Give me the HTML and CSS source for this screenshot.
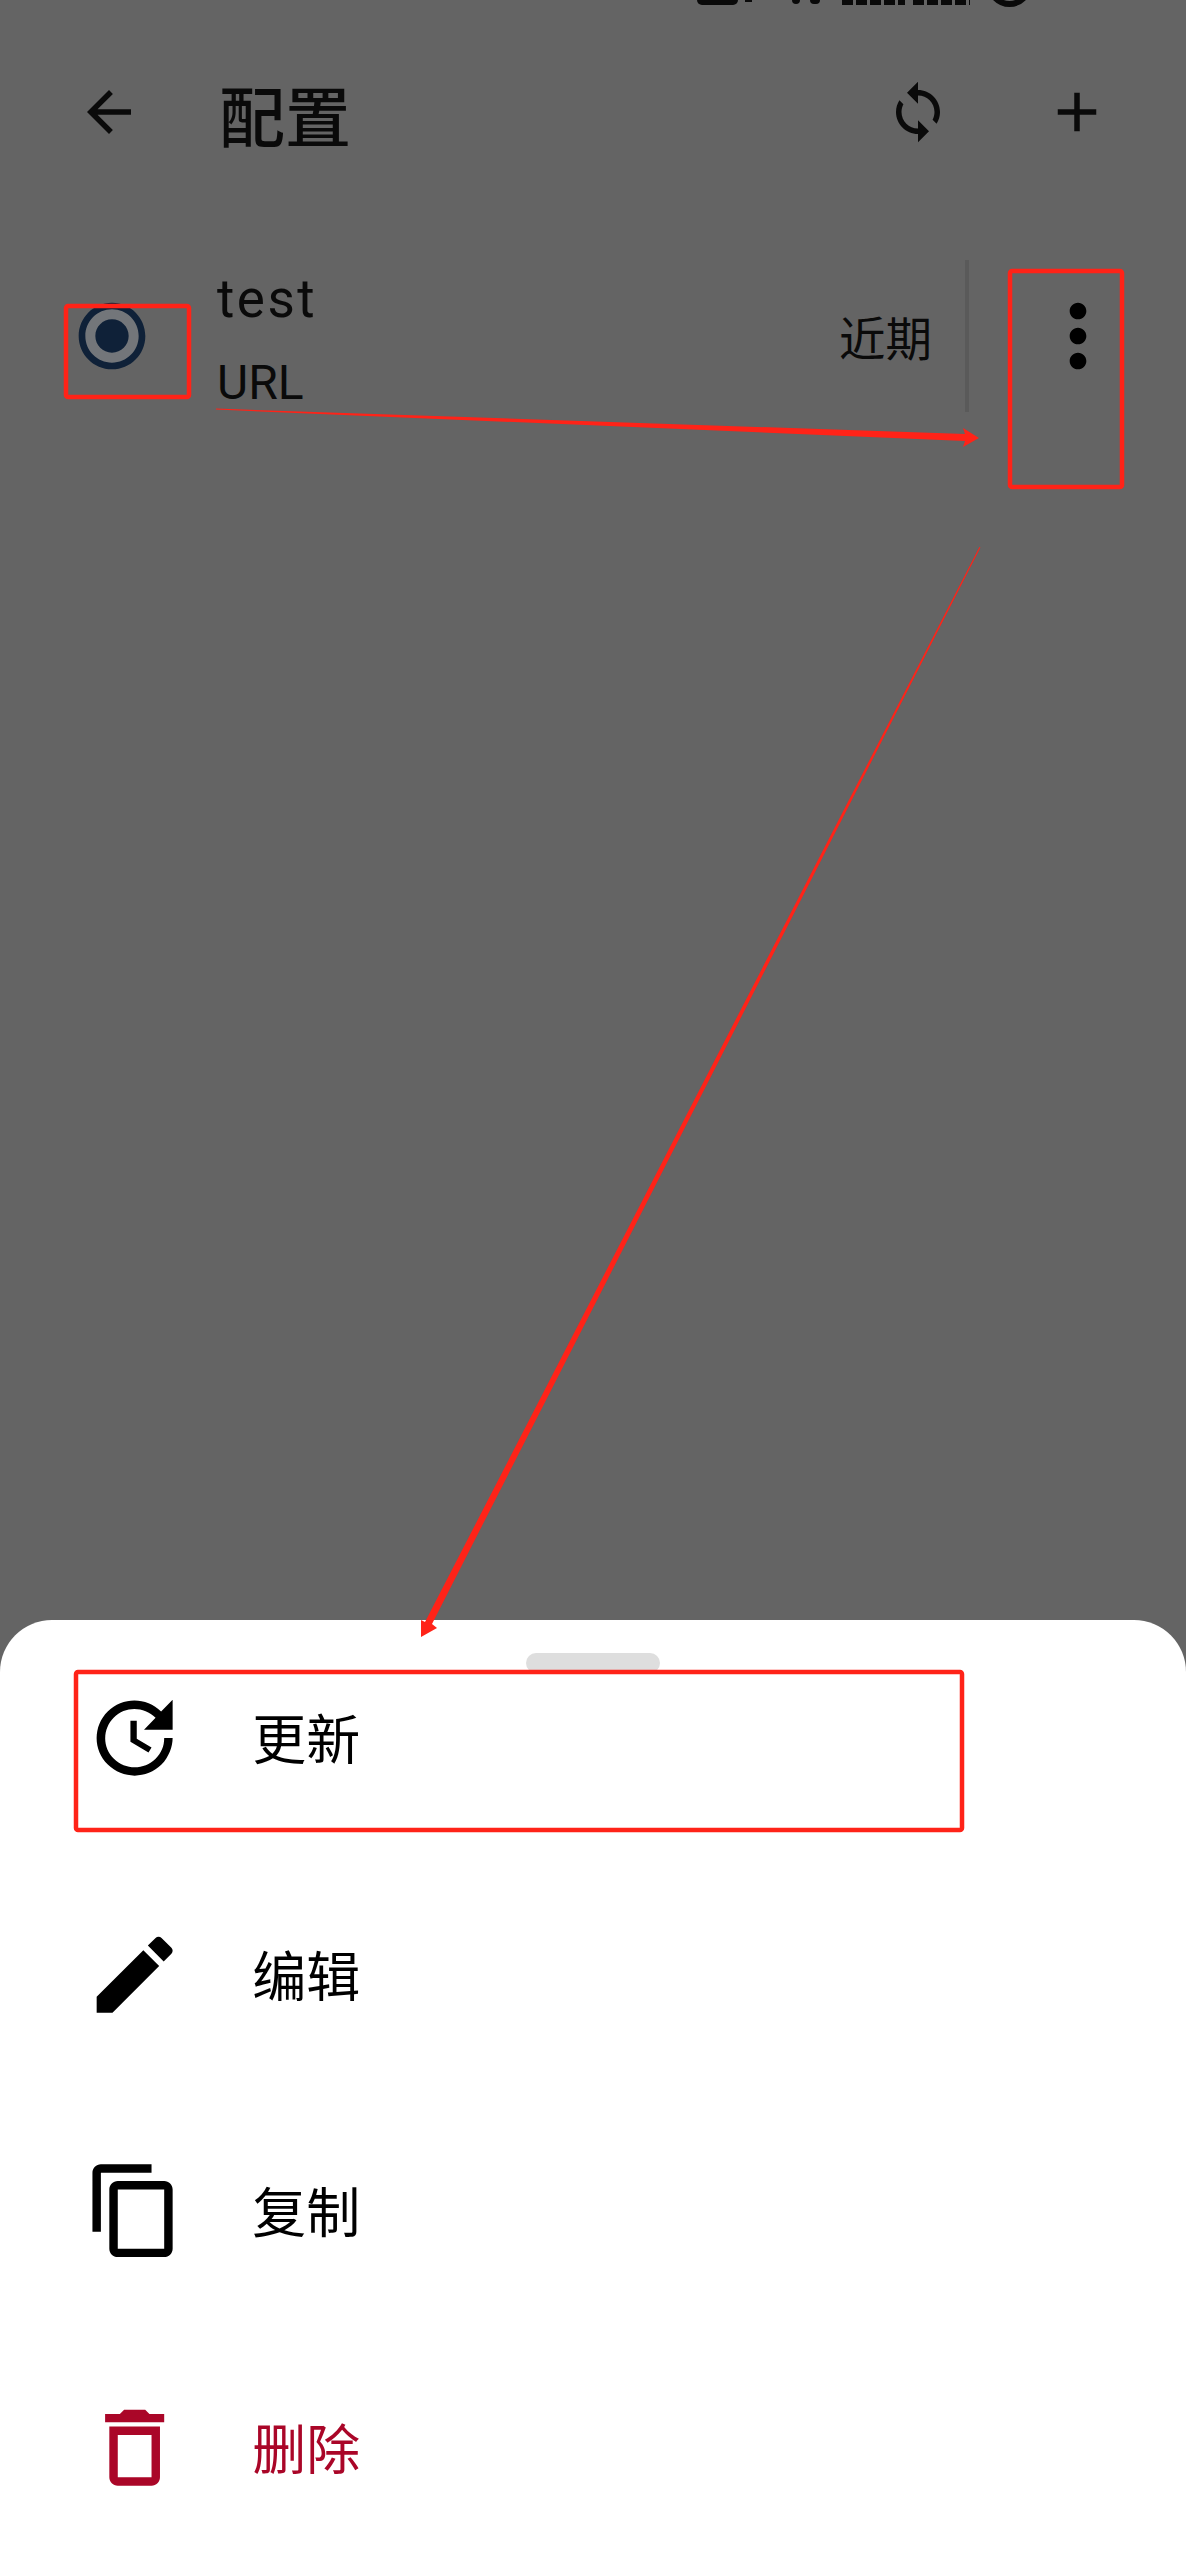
FILE: index.html
```html
<!DOCTYPE html>
<html lang="zh">
<head>
<meta charset="utf-8">
<title>配置</title>
<link rel="stylesheet" href="styles.css">
</head>
<body>
<div class="screen">
  <div class="statusbar">
    <span class="s-cam"></span><span class="s-cam-dot"></span><span class="s-dot"></span><span class="s-tri"></span><span class="s-sig"></span><span class="s-sig short"></span><span class="s-clock"></span>
  </div>
  <header class="appbar">
    <svg class="icon-bar back" viewBox="0 0 24 24"><path d="M20 11H7.83l5.59-5.59L12 4l-8 8 8 8 1.41-1.41L7.83 13H20v-2z"/></svg>
    <h1 class="title">配置</h1>
    <svg class="icon-bar sync" viewBox="0 0 24 24"><path d="M12 4V1L8 5l4 4V6c3.31 0 6 2.69 6 6 0 1.01-.25 1.97-.7 2.8l1.46 1.46C19.54 15.03 20 13.57 20 12c0-4.42-3.58-8-8-8zm0 14c-3.31 0-6-2.69-6-6 0-1.01.25-1.97.7-2.8L5.24 7.74C4.46 8.97 4 10.43 4 12c0 4.42 3.58 8 8 8v3l4-4-4-4v3z"/></svg>
    <svg class="icon-bar add" viewBox="0 0 24 24"><path d="M19 13h-6v6h-2v-6H5v-2h6V5h2v6h6v2z"/></svg>
  </header>
  <section class="profile">
    <svg class="radio" viewBox="0 0 24 24"><circle class="radio-bg" cx="12" cy="12" r="9"/><path d="M12 7c-2.76 0-5 2.24-5 5s2.24 5 5 5 5-2.24 5-5-2.24-5-5-5zm0-5C6.48 2 2 6.48 2 12s4.48 10 10 10 10-4.48 10-10S17.52 2 12 2zm0 18c-4.42 0-8-3.58-8-8s3.58-8 8-8 8 3.58 8 8-3.58 8-8 8z"/></svg>
    <div class="profile-text">
      <div class="profile-name">test</div>
      <div class="profile-type">URL</div>
    </div>
    <div class="profile-time">近期</div>
    <div class="divider"></div>
    <svg class="more" viewBox="0 0 24 24"><path d="M12 8c1.1 0 2-.9 2-2s-.9-2-2-2-2 .9-2 2 .9 2 2 2zm0 2c-1.1 0-2 .9-2 2s.9 2 2 2 2-.9 2-2-.9-2-2-2zm0 6c-1.1 0-2 .9-2 2s.9 2 2 2 2-.9 2-2-.9-2-2-2z"/></svg>
  </section>
  <div class="spacer"></div>
  <section class="sheet">
    <div class="handle"></div>
    <ul class="menu">
      <li class="menu-row">
        <svg class="menu-icon" viewBox="0 0 24 24"><path d="M21 10.12h-6.78l2.74-2.82c-2.73-2.7-7.15-2.8-9.88-.1-2.73 2.71-2.73 7.08 0 9.79s7.15 2.71 9.88 0C18.32 15.65 19 14.08 19 12.1h2c0 1.98-.88 4.55-2.64 6.29-3.51 3.48-9.21 3.48-12.72 0-3.5-3.47-3.53-9.11-.02-12.58s9.14-3.47 12.65 0L21 3v7.12zM12.5 8v4.25l3.5 2.08-.72 1.21L11 13V8h1.5z"/></svg>
        <span class="menu-label">更新</span>
      </li>
      <li class="menu-row">
        <svg class="menu-icon" viewBox="0 0 24 24"><path d="M3 17.25V21h3.75L17.81 9.94l-3.75-3.75L3 17.25zM20.71 7.04c.39-.39.39-1.02 0-1.41l-2.34-2.34c-.39-.39-1.02-.39-1.41 0l-1.83 1.83 3.75 3.75 1.83-1.83z"/></svg>
        <span class="menu-label">编辑</span>
      </li>
      <li class="menu-row">
        <svg class="menu-icon" viewBox="0 0 24 24"><path d="M16 1H4c-1.1 0-2 .9-2 2v14h2V3h12V1zm3 4H8c-1.1 0-2 .9-2 2v14c0 1.1.9 2 2 2h11c1.1 0 2-.9 2-2V7c0-1.1-.9-2-2-2zm0 16H8V7h11v14z"/></svg>
        <span class="menu-label">复制</span>
      </li>
      <li class="menu-row danger">
        <svg class="menu-icon" viewBox="0 0 24 24"><path d="M6 19c0 1.1.9 2 2 2h8c1.1 0 2-.9 2-2V7H6v12zM8 9h8v10H8V9zm7.5-5l-1-1h-5l-1 1H5v2h14V4z"/></svg>
        <span class="menu-label">删除</span>
      </li>
    </ul>
  </section>
  <svg class="annotations" viewBox="0 0 1186 2560">
    <rect class="note-box" x="66" y="306" width="123" height="91" rx="2"/>
    <rect class="note-box" x="1010" y="271" width="112" height="216" rx="2"/>
    <rect class="note-box" x="76" y="1672" width="886" height="158" rx="2"/>
    <polygon class="note-arrow" points="216,408.6 216,409.6 965,441 963,447 979,438 963,428 965,434"/>
    <polygon class="note-arrow" points="979.4,547 980.4,547.6 432,1624 437,1628 421,1637 421,1620 425,1622"/>
  </svg>
</div>
</body>
</html>
```
FILE: styles.css
```css
* { box-sizing: border-box; }
html, body { margin: 0; padding: 0; }
body { font-family: Roboto, "Noto Sans CJK SC", sans-serif; color: #000; }
.screen {
  position: relative;
  width: 1186px;
  height: 2560px;
  background: #646464;
  display: flex;
  flex-direction: column;
  overflow: hidden;
}
.statusbar {
  height: 8px;
  flex: none;
  overflow: hidden;
  display: flex;
  align-items: flex-start;
  padding-left: 697px;
}
.statusbar span { display: block; background: #0a0a0a; flex: none; }
.s-cam { width: 41px; height: 5px; border-radius: 0 0 6px 6px; }
.s-cam-dot { width: 7px; height: 2px; margin-left: 7px; }
.s-dot { width: 8px; height: 4px; margin-left: 40px; border-radius: 0 0 4px 4px; }
.s-tri { width: 10px; height: 4px; margin-left: 10px; border-radius: 0 0 5px 5px; }
.statusbar .s-sig {
  width: 63px;
  height: 5px;
  margin-left: 22px;
  background: repeating-linear-gradient(90deg, #0a0a0a 0 11px, transparent 11px 14px);
}
.statusbar .s-sig.short { width: 57px; margin-left: 8px; }
.statusbar .s-clock {
  width: 45px;
  height: 45px;
  margin-left: 17px;
  margin-top: -38px;
  border-radius: 50%;
  border: 6px solid #0a0a0a;
  background: transparent;
}

.appbar {
  height: 208px;
  flex: none;
  display: flex;
  align-items: center;
  padding: 0 76px;
}
.icon-bar { width: 66px; height: 66px; flex: none; fill: #0a0a0a; }
.title {
  margin: 2px 0 0 77px;
  flex: 1;
  font-size: 66px;
  line-height: 80px;
  font-weight: 500;
  font-family: "Noto Sans CJK SC", sans-serif;
  color: #0a0a0a;
}
.add { margin-left: 93px; }

.profile {
  flex: none;
  height: 200px;
  margin-top: 44px;
  display: flex;
  align-items: flex-start;
  padding: 0 58px 0 72px;
}
.radio { width: 80px; height: 80px; flex: none; margin-top: 36px; fill: #0f2138; }
.radio-bg { fill: #73767a; }
.profile-text { flex: 1; margin-left: 65px; margin-top: 9px; }
.profile-name { font-size: 53px; line-height: 60px; letter-spacing: 2.5px; color: #0a0a0a; }
.profile-type { font-size: 48px; line-height: 60px; margin-top: 24px; color: #0a0a0a; }
.profile-time {
  font-size: 46.5px;
  line-height: 60px;
  margin-top: 50px;
  color: #0a0a0a;
}
.divider { width: 4px; height: 152px; background: #5a5a5a; margin-left: 33px; flex: none; }
.more { width: 100px; height: 100px; flex: none; margin-left: 59px; margin-top: 26px; }

.spacer { flex: 1; }
.sheet {
  flex: none;
  height: 940px;
  background: #fff;
  border-radius: 52px 52px 0 0;
  padding-top: 33px;
}
.handle { width: 134px; height: 20px; border-radius: 10px; background: #dedede; margin: 0 auto; }
.menu { list-style: none; margin: 0; padding: 0; }
.menu-row {
  height: 236.7px;
  display: flex;
  align-items: flex-start;
  padding-left: 84px;
  margin-top: -3px;
}
.menu-row + .menu-row { margin-top: 0; }
.menu-icon { width: 101.3px; height: 101.3px; flex: none; margin-top: 17px; fill: #000; }
.menu-label {
  margin-left: 67px;
  margin-top: 32px;
  font-size: 54px;
  line-height: 70px;
  font-family: "Noto Sans CJK SC", sans-serif;
}
.danger .menu-icon { fill: #aa0628; }
.danger .menu-label { color: #aa0628; }

.annotations { position: absolute; left: 0; top: 0; width: 1186px; height: 2560px; pointer-events: none; }
.note-box { fill: none; stroke: #ff2318; stroke-width: 4.5; }
.note-arrow { fill: #ff2318; }
```
